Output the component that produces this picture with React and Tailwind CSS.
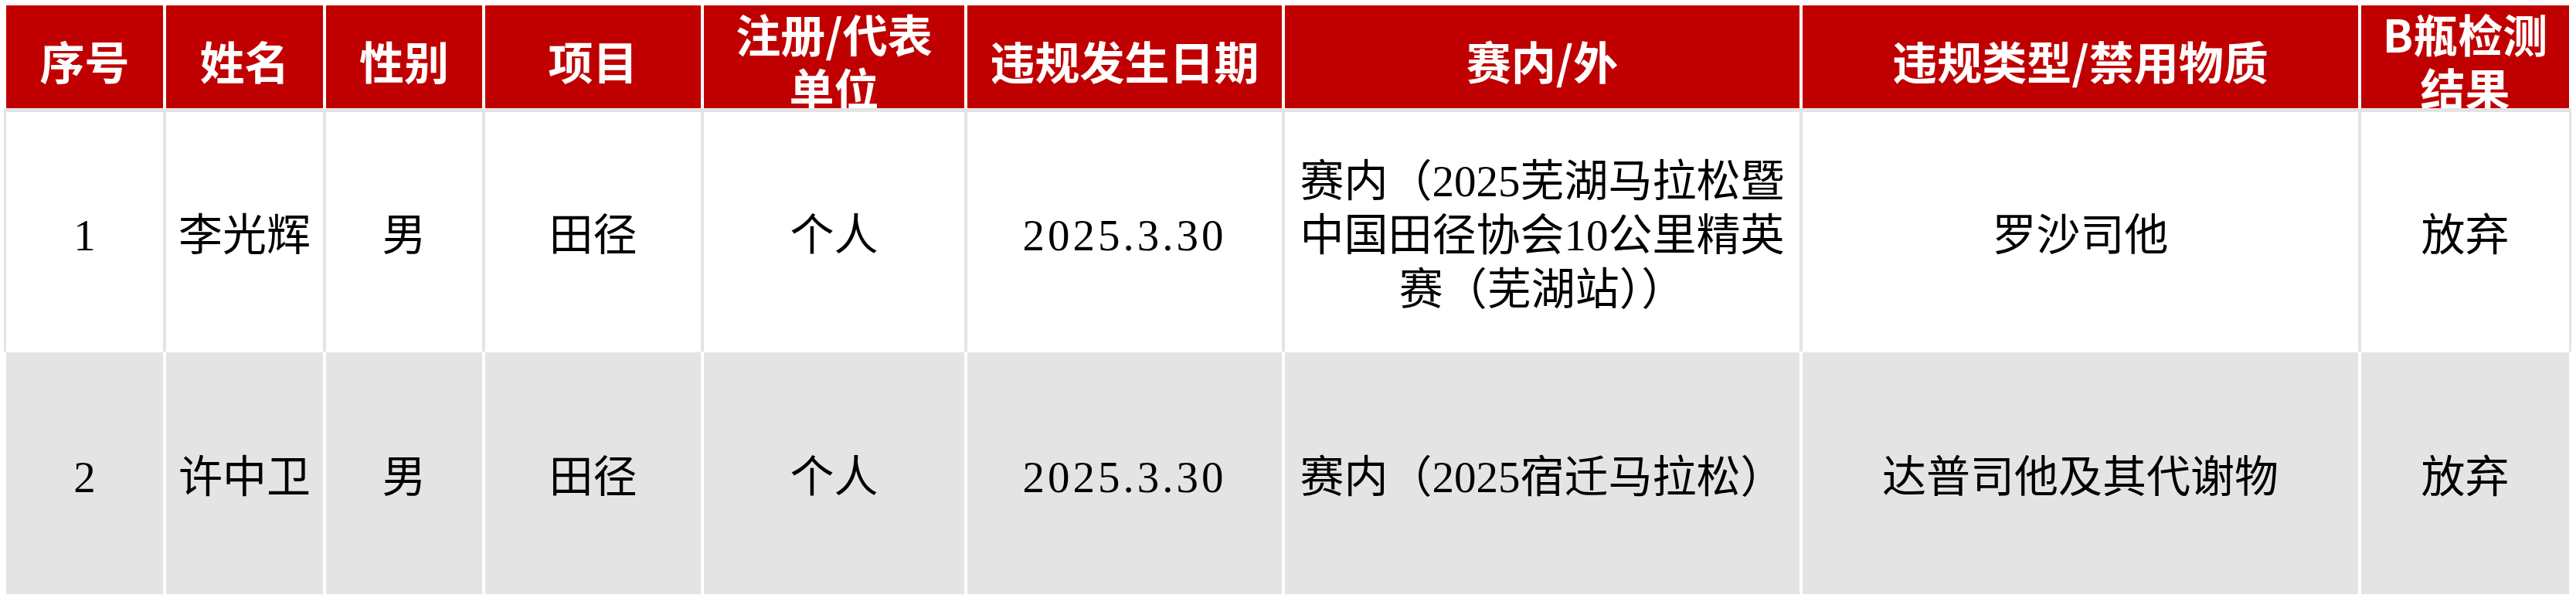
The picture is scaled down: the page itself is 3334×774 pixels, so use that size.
import React from "react";

const cols = "grid grid-cols-[203px_203px_202px_279px_337px_407px_666px_719px_269px] gap-x-[4px]";

const headers = [
  ["序号"],
  ["姓名"],
  ["性别"],
  ["项目"],
  ["注册/代表", "单位"],
  ["违规发生日期"],
  ["赛内/外"],
  ["违规类型/禁用物质"],
  ["B瓶检测", "结果"],
];

const rows = [
  ["1", "李光辉", "男", "田径", "个人", "2025.3.30", "赛内（2025芜湖马拉松暨中国田径协会10公里精英赛（芜湖站））", "罗沙司他", "放弃"],
  ["2", "许中卫", "男", "田径", "个人", "2025.3.30", "赛内（2025宿迁马拉松）", "达普司他及其代谢物", "放弃"],
];

const bodyFont = "font-['Liberation_Serif','Noto_Sans_CJK_SC',serif]";

function BodyCell({ children, date, bg }) {
  return (
    <div
      className={`flex items-center justify-center px-[8px] pt-[10px] text-center text-[57px] leading-[70px] text-black ${bodyFont} ${bg} ${date ? "tracking-[4px]" : ""}`}
    >
      {children}
    </div>
  );
}

export default function App() {
  return (
    <div className="min-h-screen bg-white pt-[7px] pl-[8px]">
      <div className="w-[3317px]">

        {/* 表头 */}
        <div className={`${cols} h-[133px] bg-white`}>
          {headers.map((lines, i) => (
            <div
              key={i}
              className="flex flex-col items-center justify-center overflow-hidden bg-[#c00000] pt-[8px] text-center text-[58px] font-bold leading-[70px] text-white font-['Noto_Sans_CJK_SC',sans-serif]"
            >
              {lines.map((line) => (
                <div key={line} className="whitespace-nowrap">{line}</div>
              ))}
            </div>
          ))}
        </div>

        {/* 第一行 */}
        <div className={`${cols} h-[315px] mx-[-3px] bg-[#e4e4e4] px-[3px] pt-[5px]`}>
          {rows[0].map((cell, i) => (
            <BodyCell key={i} date={i === 5} bg="bg-white">{cell}</BodyCell>
          ))}
        </div>

        {/* 第二行 */}
        <div className={`${cols} h-[313px] mt-[1px] bg-white`}>
          {rows[1].map((cell, i) => (
            <BodyCell key={i} date={i === 5} bg="bg-[#e4e4e4]">{cell}</BodyCell>
          ))}
        </div>

      </div>
    </div>
  );
}
